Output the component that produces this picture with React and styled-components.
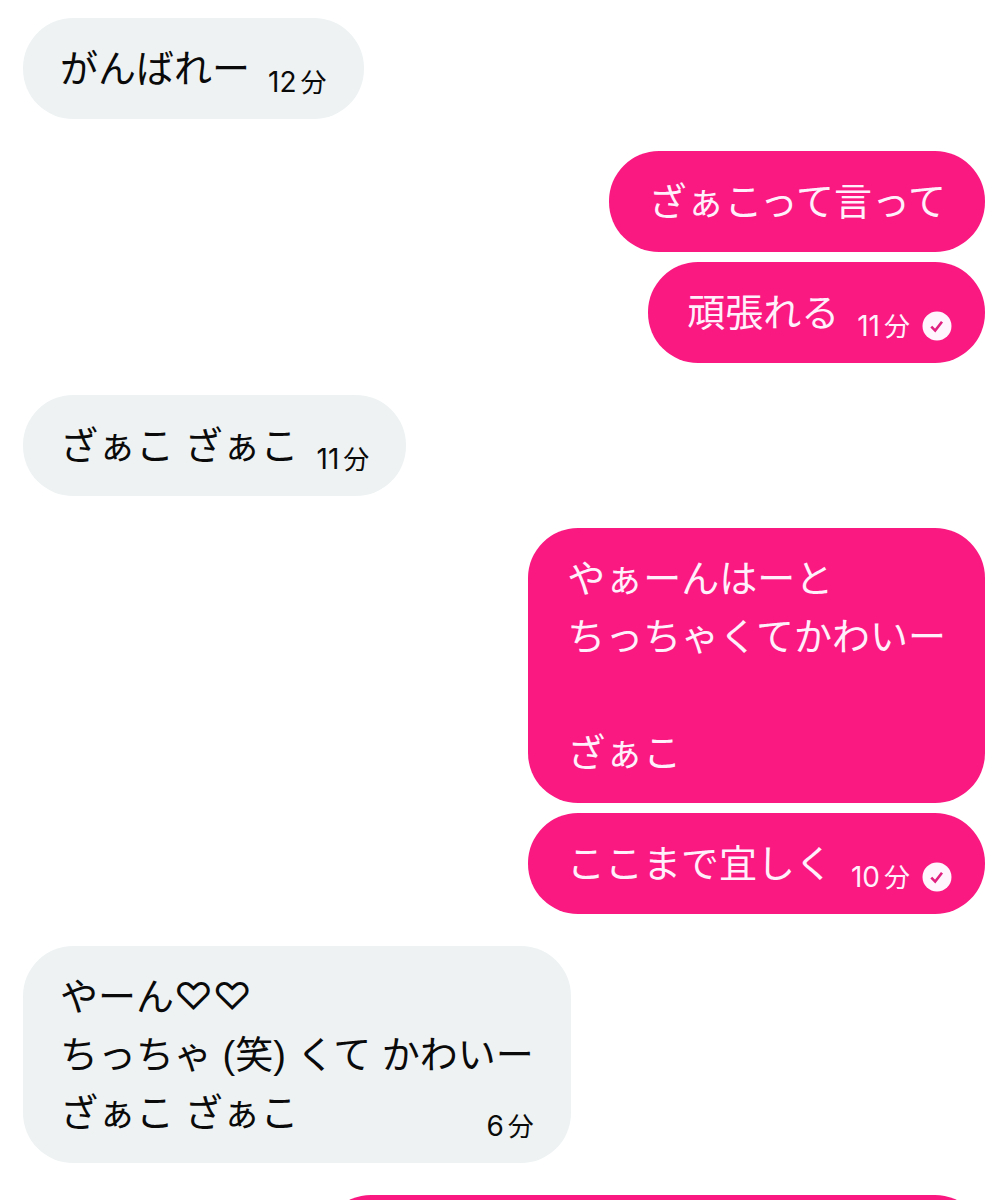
import styled, { createGlobalStyle } from "styled-components";

const GlobalStyle = createGlobalStyle`
  *,
  *::before,
  *::after {
    box-sizing: border-box;
  }

  body {
    margin: 0;
    background-color: #fff;
    font-family: "Liberation Sans", Inter, "Noto Sans CJK JP", sans-serif;
  }
`;

const Thread = styled.main`
  display: flex;
  flex-direction: column;
  gap: 32px;
  height: 100vh;
  padding: 18px 23px 0;
  overflow: hidden;
`;

const Group = styled.section`
  display: flex;
  flex-direction: column;
  flex-shrink: 0;
  gap: 10px;
  align-items: ${(props) => (props.$own ? "flex-end" : "flex-start")};
`;

const Bubble = styled.article`
  min-width: ${(props) => (props.$wide ? "69%" : "0")};
  min-height: 101px;
  padding: ${(props) => (props.$own ? "22px 39px 21px" : "22px 37px 21px")};
  border-radius: 50px;
  font-size: 38px;
  line-height: 58px;
  color: ${(props) => (props.$own ? "#fff0fb" : "#0a0a0a")};
  background-color: ${(props) => (props.$own ? "#fa1881" : "#eef2f3")};
`;

const Line = styled.p`
  display: flex;
  justify-content: space-between;
  gap: 18px;
  min-height: 58px;
  margin: 0;
  white-space: nowrap;
`;

const Meta = styled.span`
  display: flex;
  align-items: center;
  gap: 12px;
  height: 58px;
  padding-top: 26px;
  margin-right: ${(props) => (props.$own ? "-6px" : "0")};
  font-family: Inter, "Noto Sans CJK JP", sans-serif;
  font-size: 28px;
  line-height: 32px;
`;

const Time = styled.time`
  display: flex;
  align-items: baseline;
  gap: 4px;
`;

const Unit = styled.span`
  font-size: 26px;
`;

function ReadIcon() {
  return (
    <svg width="30" height="30" viewBox="0 0 30 30" role="img" aria-label="既読">
      <circle cx="15" cy="15" r="14.5" fill="#fff5fd" />
      <path
        d="M9.3 15.6l3.9 4 6.8-8.8"
        fill="none"
        stroke="#e0217f"
        strokeWidth="2.6"
      />
    </svg>
  );
}

const groups = [
  { id: 1, messages: [{ id: 1, lines: ["がんばれー"], minutes: 12 }] },
  {
    id: 2,
    own: true,
    messages: [
      { id: 2, lines: ["ざぁこって言って"] },
      { id: 3, lines: ["頑張れる"], minutes: 11 },
    ],
  },
  { id: 3, messages: [{ id: 4, lines: ["ざぁこ ざぁこ"], minutes: 11 }] },
  {
    id: 4,
    own: true,
    messages: [
      {
        id: 5,
        lines: ["やぁーんはーと", "ちっちゃくてかわいー", "", "ざぁこ"],
      },
      { id: 6, lines: ["ここまで宜しく"], minutes: 10 },
    ],
  },
  {
    id: 5,
    messages: [
      {
        id: 7,
        lines: ["やーん♡♡", "ちっちゃ (笑) くて かわいー", "ざぁこ ざぁこ"],
        minutes: 6,
      },
    ],
  },
  { id: 6, own: true, messages: [{ id: 8, lines: [], wide: true }] },
];

function Message({ message, own }) {
  const { lines, minutes, wide } = message;

  return (
    <Bubble $own={own} $wide={wide}>
      {lines.map((line, index) => (
        <Line key={index}>
          <span>{line}</span>
          {minutes && index === lines.length - 1 && (
            <Meta $own={own}>
              <Time dateTime={`PT${minutes}M`}>
                {minutes}
                <Unit>分</Unit>
              </Time>
              {own && <ReadIcon />}
            </Meta>
          )}
        </Line>
      ))}
    </Bubble>
  );
}

export default function App() {
  return (
    <>
      <GlobalStyle />
      <Thread>
        {groups.map((group) => (
          <Group key={group.id} $own={group.own}>
            {group.messages.map((message) => (
              <Message key={message.id} message={message} own={group.own} />
            ))}
          </Group>
        ))}
      </Thread>
    </>
  );
}
